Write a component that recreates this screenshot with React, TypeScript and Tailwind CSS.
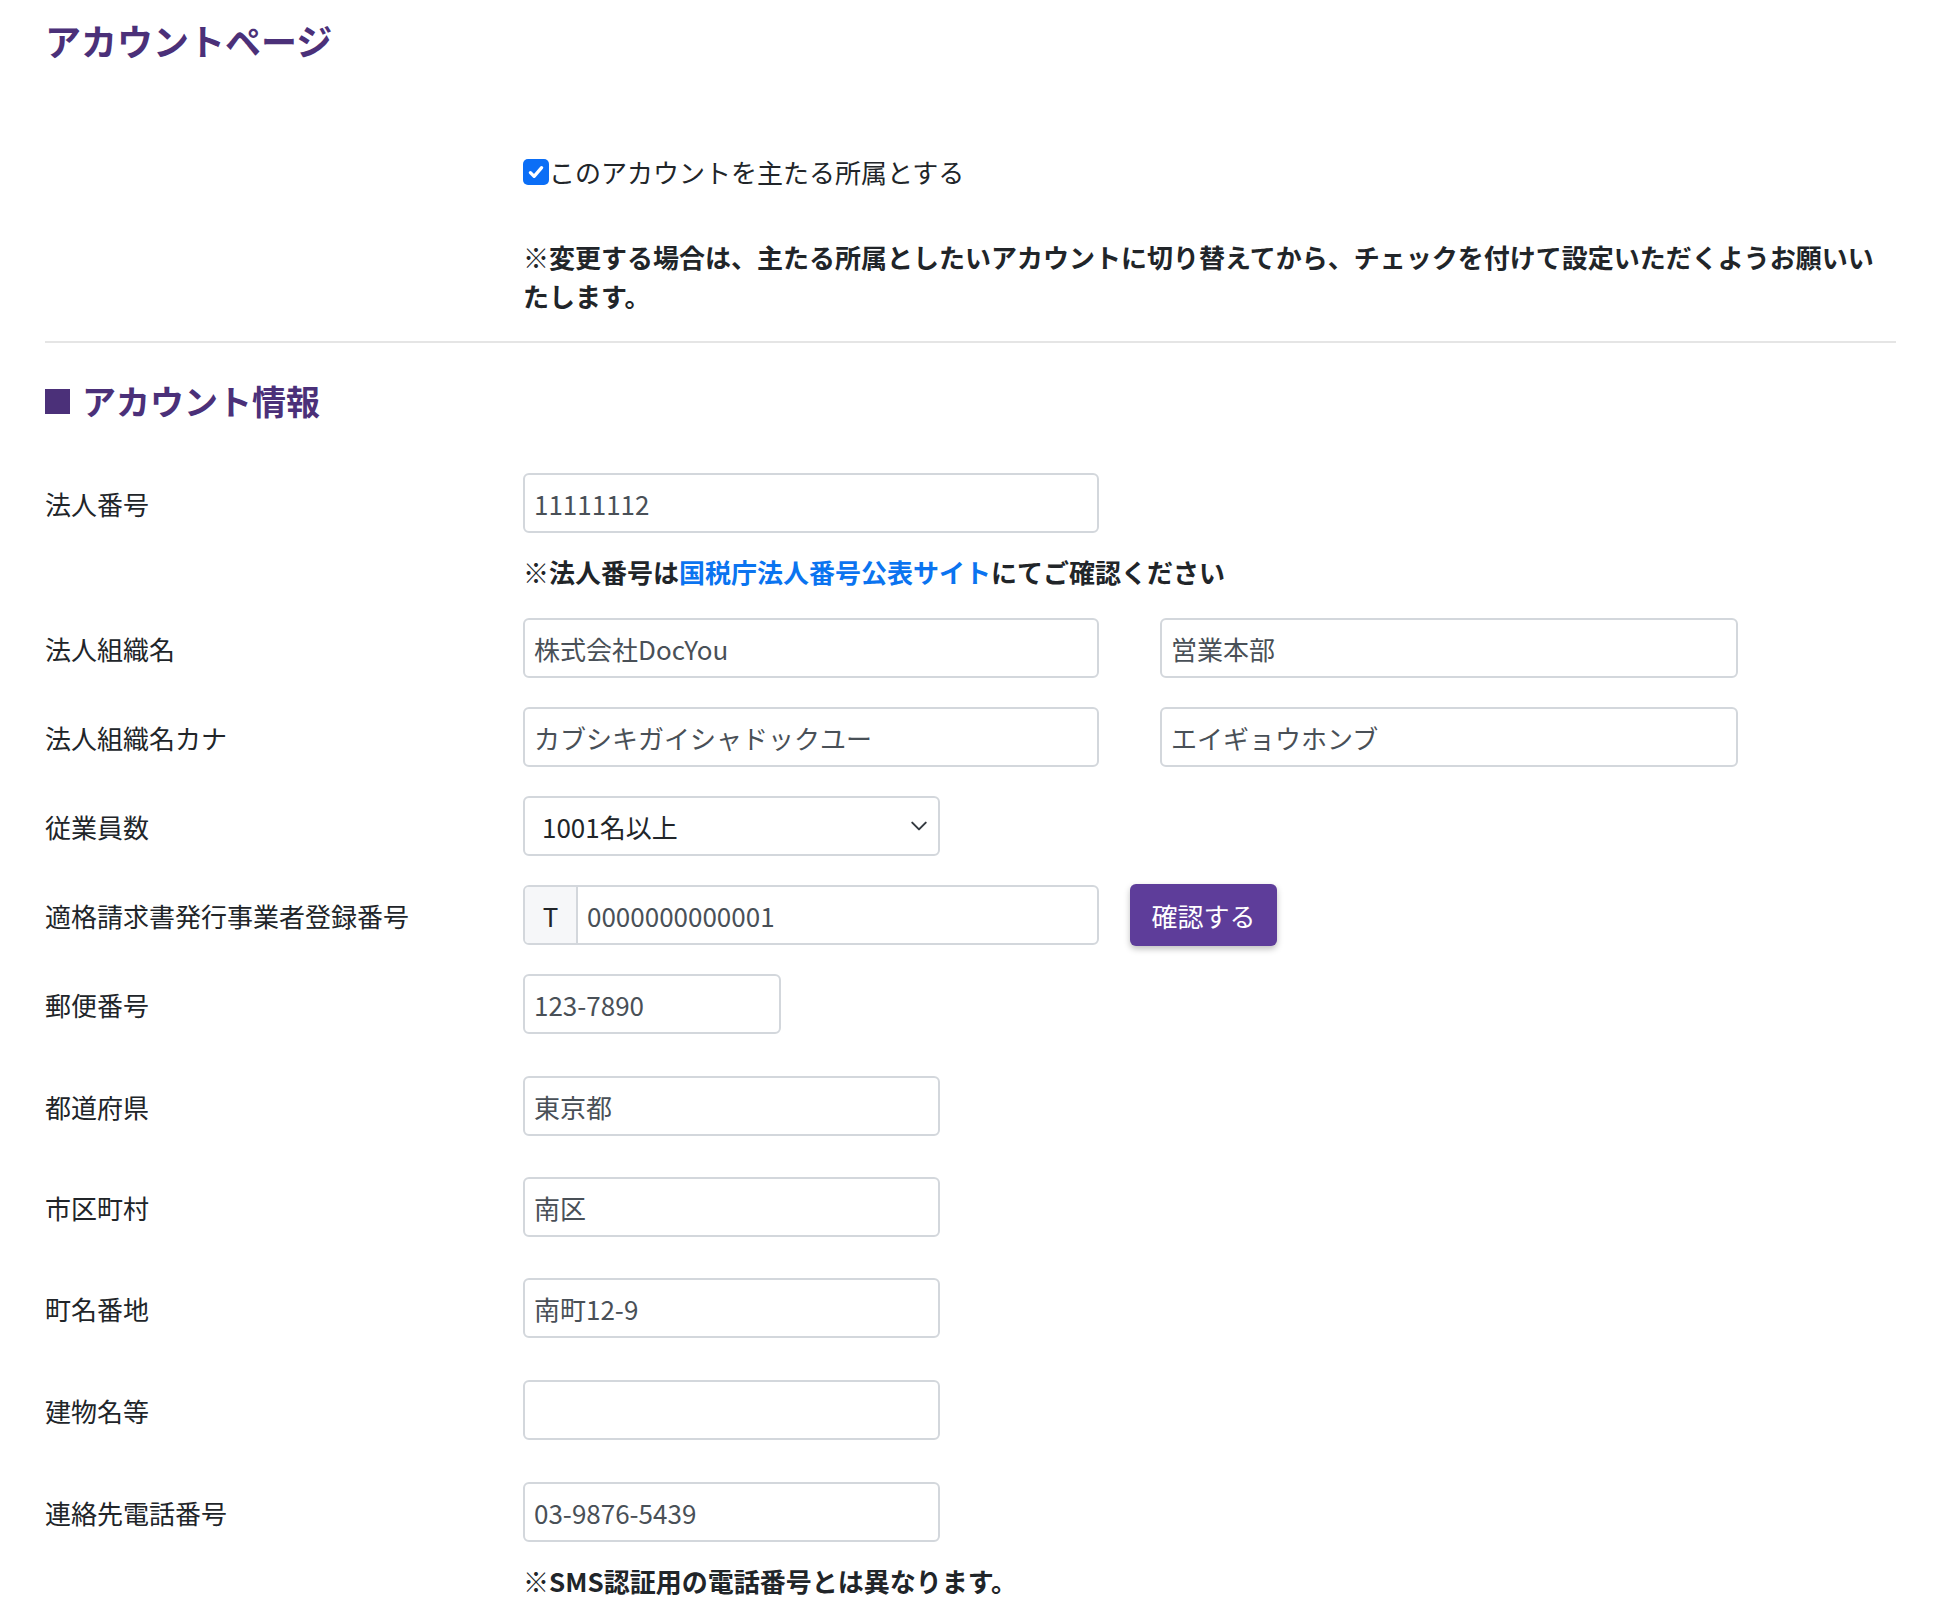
import React from 'react'

const FONT = '"Noto Sans CJK JP", "Noto Sans", sans-serif'

/**
 * 入力欄 (読み取り表示)
 */
const Field = ({ value, width }: { value: string; width: string }) => (
  <div
    className={`flex h-[60px] items-center rounded-[6px] border-2 border-[#d3d7dc] bg-white px-[9px] text-[26px] text-[#495057] ${width}`}
  >
    {value}
  </div>
)

/**
 * ラベル + 入力欄の行
 */
const Row = ({
  label,
  children,
  className = ''
}: {
  label: string
  children: React.ReactNode
  className?: string
}) => (
  <div className={`grid grid-cols-[478px_1fr] items-center ${className}`}>
    <div className="text-[26px] text-[#212529]">{label}</div>
    <div className="flex items-center">{children}</div>
  </div>
)

const App: React.FC = () => {
  return (
    <div className="min-h-[1613px] bg-white pl-[45px] pr-[37px] pb-10" style={{ fontFamily: FONT }}>
      <h1 className="pt-[18px] text-[36px] font-bold leading-[44px] text-[#4b3079]">アカウントページ</h1>

      {/* 主たる所属 */}
      <div className="ml-[478px] mt-[90px] flex h-[39px] items-center text-[26px] text-[#212529]">
        <span className="flex h-[26px] w-[26px] items-center justify-center rounded-[5px] bg-[#0b6ef6]">
          <svg viewBox="0 0 16 16" className="h-[20px] w-[20px]" fill="none">
            <path d="M3.5 8.5l3 3 6-7" stroke="white" strokeWidth="2.6" strokeLinecap="round" strokeLinejoin="round" />
          </svg>
        </span>
        <span>このアカウントを主たる所属とする</span>
      </div>
      <p className="ml-[478px] mt-[46px] text-[26px] font-bold leading-[39px] text-[#212529]">
        ※変更する場合は、主たる所属としたいアカウントに切り替えてから、チェックを付けて設定いただくようお願いいたします。
      </p>

      <hr className="mt-[26px] border-t-2 border-[#e5e5e5]" />

      {/* アカウント情報 */}
      <h2 className="mt-[38px] flex items-center text-[34px] font-bold leading-[40px] text-[#4b3079]">
        <span className="mr-[12px] inline-block h-[25px] w-[25px] bg-[#4b3079]" />
        アカウント情報
      </h2>

      <Row label="法人番号" className="mt-[52px]">
        <Field value="11111112" width="w-[576px]" />
      </Row>
      <p className="ml-[478px] mt-[19px] text-[26px] font-bold leading-[39px] text-[#212529]">
        ※法人番号は<span className="text-[#0b74f0]">国税庁法人番号公表サイト</span>にてご確認ください
      </p>

      <Row label="法人組織名" className="mt-[27px]">
        <Field value="株式会社DocYou" width="w-[576px]" />
        <div className="ml-[61px]">
          <Field value="営業本部" width="w-[578px]" />
        </div>
      </Row>
      <Row label="法人組織名カナ" className="mt-[29px]">
        <Field value="カブシキガイシャドックユー" width="w-[576px]" />
        <div className="ml-[61px]">
          <Field value="エイギョウホンブ" width="w-[578px]" />
        </div>
      </Row>
      <Row label="従業員数" className="mt-[29px]">
        <div className="flex h-[60px] w-[417px] items-center justify-between rounded-[6px] border-2 border-[#d3d7dc] bg-white pl-[17px] pr-[10px] text-[26px] text-[#212529]">
          <span>1001名以上</span>
          <svg viewBox="0 0 16 16" className="h-[18px] w-[18px]" fill="none">
            <path d="M2 5l6 6 6-6" stroke="#343a40" strokeWidth="1.8" strokeLinecap="round" strokeLinejoin="round" />
          </svg>
        </div>
      </Row>
      <Row label="適格請求書発行事業者登録番号" className="mt-[28px]">
        <div className="flex h-[60px] w-[576px] overflow-hidden rounded-[6px] border-2 border-[#d3d7dc] text-[26px]">
          <div className="flex w-[53px] items-center justify-center border-r-2 border-[#d3d7dc] bg-[#f6f7f9] text-[#212529]">T</div>
          <div className="flex flex-1 items-center px-[9px] text-[#495057]">0000000000001</div>
        </div>
        <button className="ml-[31px] h-[62px] w-[147px] rounded-[6px] bg-[#5e3d9a] text-[26px] text-white shadow-[0_3px_6px_rgba(0,0,0,0.25)]">
          確認する
        </button>
      </Row>
      <Row label="郵便番号" className="mt-[28px]">
        <Field value="123-7890" width="w-[258px]" />
      </Row>
      <Row label="都道府県" className="mt-[42px]">
        <Field value="東京都" width="w-[417px]" />
      </Row>
      <Row label="市区町村" className="mt-[41px]">
        <Field value="南区" width="w-[417px]" />
      </Row>
      <Row label="町名番地" className="mt-[41px]">
        <Field value="南町12-9" width="w-[417px]" />
      </Row>
      <Row label="建物名等" className="mt-[42px]">
        <Field value="" width="w-[417px]" />
      </Row>
      <Row label="連絡先電話番号" className="mt-[42px]">
        <Field value="03-9876-5439" width="w-[417px]" />
      </Row>
      <p className="ml-[478px] mt-[19px] text-[26px] font-bold leading-[39px] text-[#212529]">
        ※SMS認証用の電話番号とは異なります。
      </p>
    </div>
  )
}

export default App
